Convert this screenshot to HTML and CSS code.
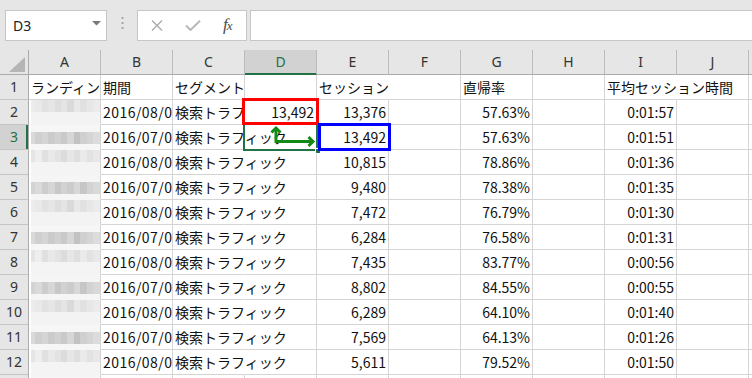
FILE: index.html
```html
<!DOCTYPE html>
<html lang="ja">
<head>
<meta charset="utf-8">
<title>Excel</title>
<link rel="stylesheet" href="styles.css">
</head>
<body>
<div class="app">
  <div class="toolbar">
    <div class="namebox"><span>D3</span><svg class="dd" width="9" height="5" viewBox="0 0 9 5"><polygon points="0,0 9,0 4.5,4.5" fill="#7a7a7a"/></svg></div>
    <div class="grip"><svg width="3" height="12" viewBox="0 0 3 12"><rect x="0.5" y="0" width="2" height="2" fill="#a8a8a8"/><rect x="0.5" y="5" width="2" height="2" fill="#a8a8a8"/><rect x="0.5" y="10" width="2" height="2" fill="#a8a8a8"/></svg></div>
    <div class="fbtns">
      <svg class="ico" width="12" height="11" viewBox="0 0 12 11"><path d="M1 0.5 L11 10.5 M11 0.5 L1 10.5" stroke="#a9a9a9" stroke-width="1.3" fill="none"/></svg>
      <svg class="ico" width="16" height="11" viewBox="0 0 16 11"><path d="M1 5.5 L5.5 10 L15 0.8" stroke="#b8b8b8" stroke-width="2" fill="none"/></svg>
      <span class="fx"><i>f</i><i class="x">x</i></span>
    </div>
    <div class="finput"></div>
  </div>

  <div class="sheet">
    <div class="ch corner"><svg width="29" height="24" viewBox="0 0 29 24"><polygon points="25,7 25,22 9,22" fill="#b5b5b5"/></svg></div>
    <div class="ch">A</div><div class="ch">B</div><div class="ch">C</div><div class="ch sel">D</div><div class="ch">E</div><div class="ch">F</div><div class="ch">G</div><div class="ch">H</div><div class="ch">I</div><div class="ch">J</div><div class="ch kk"></div>

    <div class="rh">1</div>
    <div class="c">ランディングページ</div><div class="c">期間</div><div class="c">セグメント</div><div class="c"></div><div class="c ov">セッション</div><div class="c"></div><div class="c">直帰率</div><div class="c"></div><div class="c ov">平均セッション時間</div><div class="c"></div><div class="c"></div>

    <div class="rh">2</div>
    <div class="c bl a1"></div><div class="c dt">2016/08/01</div><div class="c">検索トラフィック</div><div class="c n">13,492</div><div class="c n">13,376</div><div class="c"></div><div class="c n">57.63%</div><div class="c"></div><div class="c n">0:01:57</div><div class="c"></div><div class="c"></div>

    <div class="rh sel">3</div>
    <div class="c bl b1"></div><div class="c dt">2016/07/01</div><div class="c ov">検索トラフィック</div><div class="c"></div><div class="c n">13,492</div><div class="c"></div><div class="c n">57.63%</div><div class="c"></div><div class="c n">0:01:51</div><div class="c"></div><div class="c"></div>

    <div class="rh">4</div>
    <div class="c bl a2"></div><div class="c dt">2016/08/01</div><div class="c ov">検索トラフィック</div><div class="c"></div><div class="c n">10,815</div><div class="c"></div><div class="c n">78.86%</div><div class="c"></div><div class="c n">0:01:36</div><div class="c"></div><div class="c"></div>

    <div class="rh">5</div>
    <div class="c bl b2"></div><div class="c dt">2016/07/01</div><div class="c ov">検索トラフィック</div><div class="c"></div><div class="c n">9,480</div><div class="c"></div><div class="c n">78.38%</div><div class="c"></div><div class="c n">0:01:35</div><div class="c"></div><div class="c"></div>

    <div class="rh">6</div>
    <div class="c bl a1"></div><div class="c dt">2016/08/01</div><div class="c ov">検索トラフィック</div><div class="c"></div><div class="c n">7,472</div><div class="c"></div><div class="c n">76.79%</div><div class="c"></div><div class="c n">0:01:30</div><div class="c"></div><div class="c"></div>

    <div class="rh">7</div>
    <div class="c bl b1"></div><div class="c dt">2016/07/01</div><div class="c ov">検索トラフィック</div><div class="c"></div><div class="c n">6,284</div><div class="c"></div><div class="c n">76.58%</div><div class="c"></div><div class="c n">0:01:31</div><div class="c"></div><div class="c"></div>

    <div class="rh">8</div>
    <div class="c bl a2"></div><div class="c dt">2016/08/01</div><div class="c ov">検索トラフィック</div><div class="c"></div><div class="c n">7,435</div><div class="c"></div><div class="c n">83.77%</div><div class="c"></div><div class="c n">0:00:56</div><div class="c"></div><div class="c"></div>

    <div class="rh">9</div>
    <div class="c bl b2"></div><div class="c dt">2016/07/01</div><div class="c ov">検索トラフィック</div><div class="c"></div><div class="c n">8,802</div><div class="c"></div><div class="c n">84.55%</div><div class="c"></div><div class="c n">0:00:55</div><div class="c"></div><div class="c"></div>

    <div class="rh">10</div>
    <div class="c bl a1"></div><div class="c dt">2016/08/01</div><div class="c ov">検索トラフィック</div><div class="c"></div><div class="c n">6,289</div><div class="c"></div><div class="c n">64.10%</div><div class="c"></div><div class="c n">0:01:40</div><div class="c"></div><div class="c"></div>

    <div class="rh">11</div>
    <div class="c bl b1"></div><div class="c dt">2016/07/01</div><div class="c ov">検索トラフィック</div><div class="c"></div><div class="c n">7,569</div><div class="c"></div><div class="c n">64.13%</div><div class="c"></div><div class="c n">0:01:26</div><div class="c"></div><div class="c"></div>

    <div class="rh">12</div>
    <div class="c bl a2"></div><div class="c dt">2016/08/01</div><div class="c ov">検索トラフィック</div><div class="c"></div><div class="c n">5,611</div><div class="c"></div><div class="c n">79.52%</div><div class="c"></div><div class="c n">0:01:50</div><div class="c"></div><div class="c"></div>

    <div class="rh">13</div>
    <div class="c bl b2"></div><div class="c"></div><div class="c"></div><div class="c"></div><div class="c"></div><div class="c"></div><div class="c"></div><div class="c"></div><div class="c"></div><div class="c"></div><div class="c"></div>
  </div>

  <div class="selection"><span class="handle"></span></div>
  <div class="mark red"></div>
  <div class="mark blue"></div>
  <svg class="arrow" width="752" height="378" viewBox="0 0 752 378">
    <path d="M276 129 V141.5 H312" stroke="#138a13" stroke-width="3" fill="none"/>
    <path d="M271.5 132.5 L276 128 L280.5 132.5" stroke="#138a13" stroke-width="3" fill="none"/>
    <path d="M308.5 137 L313 141.5 L308.5 146" stroke="#138a13" stroke-width="3" fill="none"/>
  </svg>
</div>
</body>
</html>
```

FILE: styles.css
```css
* { box-sizing: border-box; }

body {
  margin: 0;
  background: #ffffff;
  font-family: "Noto Sans CJK JP", "Noto Sans", sans-serif;
}

.app {
  position: relative;
  width: 752px;
  height: 378px;
  overflow: hidden;
  background: #e6e6e6;
}

/* ---------- formula bar ---------- */
.toolbar {
  height: 50px;
  display: flex;
  align-items: flex-start;
  padding: 10px 0 0 5px;
}

.namebox {
  width: 102px;
  height: 31px;
  background: #ffffff;
  border: 1px solid #c6c6c6;
  display: flex;
  align-items: center;
  justify-content: space-between;
  padding: 0 5px 0 7px;
  font: 14px "Noto Sans", sans-serif;
  color: #222222;
}

.namebox .dd { margin-top: -4px; }

.grip {
  width: 30px;
  height: 31px;
  display: flex;
  align-items: center;
  justify-content: center;
  padding-bottom: 6px;
}

.fbtns {
  width: 110px;
  height: 31px;
  background: #ffffff;
  border: 1px solid #c6c6c6;
  display: flex;
  align-items: center;
  padding: 0 0 0 13px;
  gap: 22px;
}

.fbtns .ico { margin-top: -1px; }

.fx {
  font-family: "Liberation Serif", serif;
  font-size: 17px;
  line-height: 17px;
  color: #4a4a4a;
  margin-left: 0;
  margin-top: -2px;
  letter-spacing: -1px;
}

.fx .x { font-size: 13px; }

.finput {
  flex: 1;
  height: 31px;
  margin-left: 3px;
  margin-right: -2px;
  background: #ffffff;
  border: 1px solid #c6c6c6;
}

/* ---------- sheet grid ---------- */
.sheet {
  background: #ffffff;
  display: grid;
  grid-template-columns: 29px repeat(10, 72px) 3px;
  grid-template-rows: repeat(14, 25px);
  height: 328px;
  overflow: hidden;
}

.ch {
  background: #e6e6e6;
  border-right: 1px solid #bcbcbc;
  border-bottom: 1px solid #ababab;
  text-align: center;
  font: 14px/24px "Noto Sans", sans-serif;
  color: #333333;
}

.ch.corner {
  border-right-color: #ababab;
  line-height: 0;
}

.ch.kk { border-right: none; }

.ch.sel {
  background: #d2d2d2;
  border-bottom-color: #217346;
  box-shadow: inset 0 -1px 0 #217346;
  color: #217346;
}

.rh {
  background: #e6e6e6;
  border-right: 1px solid #ababab;
  border-bottom: 1px solid #c4c4c4;
  text-align: center;
  font: 14px/24px "Noto Sans", sans-serif;
  color: #333333;
}

.rh.sel {
  background: #d2d2d2;
  box-shadow: inset -2px 0 0 #217346;
  color: #217346;
}

.c {
  border-right: 1px solid #d4d4d4;
  border-bottom: 1px solid #d4d4d4;
  padding: 0 2px;
  white-space: nowrap;
  overflow: hidden;
  font-size: 14px;
  line-height: 24px;
  color: #111111;
}

.c.n { text-align: right; }

.c.dt { letter-spacing: 0.45px; }

.c.ov {
  overflow: visible;
  border-right-color: transparent;
}

/* blurred (pixelated) landing page column */
.c.bl {
  border-bottom-color: transparent;
  background-repeat: no-repeat;
}

.c.bl.a1 {
  background-color: #f3f3f3;
  background-image:
    linear-gradient(#ffffff, #ffffff),
    linear-gradient(to right, #ececec 0 9%, #e9e9e9 9% 18%, #e2e2e2 18% 27%, #e6e6e6 27% 36%, #dedede 36% 45%, #e4e4e4 45% 54%, #dadada 54% 63%, #e8e8e8 63% 72%, #e1e1e1 72% 81%, #e7e7e7 81% 90%, #ebebeb 90% 100%);
  background-size: 2px 100%, 100% 12px;
  background-position: 0 0, 0 0;
}

.c.bl.a2 {
  background-color: #f4f4f4;
  background-image:
    linear-gradient(#ffffff, #ffffff),
    linear-gradient(to right, #e5e5e5 0 9%, #eeeeee 9% 18%, #e0e0e0 18% 27%, #e9e9e9 27% 36%, #e3e3e3 36% 45%, #dcdcdc 45% 54%, #e6e6e6 54% 63%, #dfdfdf 63% 72%, #eaeaea 72% 81%, #e2e2e2 81% 90%, #e8e8e8 90% 100%);
  background-size: 2px 100%, 100% 12px;
  background-position: 0 0, 0 0;
}

.c.bl.b1 {
  background-color: #f6f6f6;
  background-image:
    linear-gradient(#ffffff, #ffffff),
    linear-gradient(to right, #d9d9d9 0 9%, #cfcfcf 9% 18%, #d4d4d4 18% 27%, #cbcbcb 27% 36%, #d1d1d1 36% 45%, #c9c9c9 45% 54%, #d6d6d6 54% 63%, #c2c2c2 63% 72%, #d0d0d0 72% 81%, #d5d5d5 81% 90%, #dcdcdc 90% 100%);
  background-size: 2px 100%, 100% 12px;
  background-position: 0 0, 0 7px;
}

.c.bl.b2 {
  background-color: #f5f5f5;
  background-image:
    linear-gradient(#ffffff, #ffffff),
    linear-gradient(to right, #d3d3d3 0 9%, #dadada 9% 18%, #cdcdcd 18% 27%, #d6d6d6 27% 36%, #c8c8c8 36% 45%, #d2d2d2 45% 54%, #cccccc 54% 63%, #d8d8d8 63% 72%, #c6c6c6 72% 81%, #d3d3d3 81% 90%, #d9d9d9 90% 100%);
  background-size: 2px 100%, 100% 12px;
  background-position: 0 0, 0 7px;
}

/* ---------- overlays: selection and annotations ---------- */
.selection {
  position: absolute;
  left: 243px;
  top: 122px;
  width: 75px;
  height: 29px;
  border: 2px solid #217346;
}

.selection .handle {
  position: absolute;
  right: -5px;
  bottom: -5px;
  width: 6px;
  height: 6px;
  background: #217346;
  border: 1px solid #ffffff;
}

.mark {
  position: absolute;
  border-style: solid;
  border-width: 3px;
}

.mark.red {
  left: 242px;
  top: 98px;
  width: 77px;
  height: 27px;
  border-color: #ff0000;
}

.mark.blue {
  left: 318px;
  top: 123px;
  width: 73px;
  height: 28px;
  border-color: #0000ff;
}

.arrow {
  position: absolute;
  left: 0;
  top: 0;
  pointer-events: none;
}
```
